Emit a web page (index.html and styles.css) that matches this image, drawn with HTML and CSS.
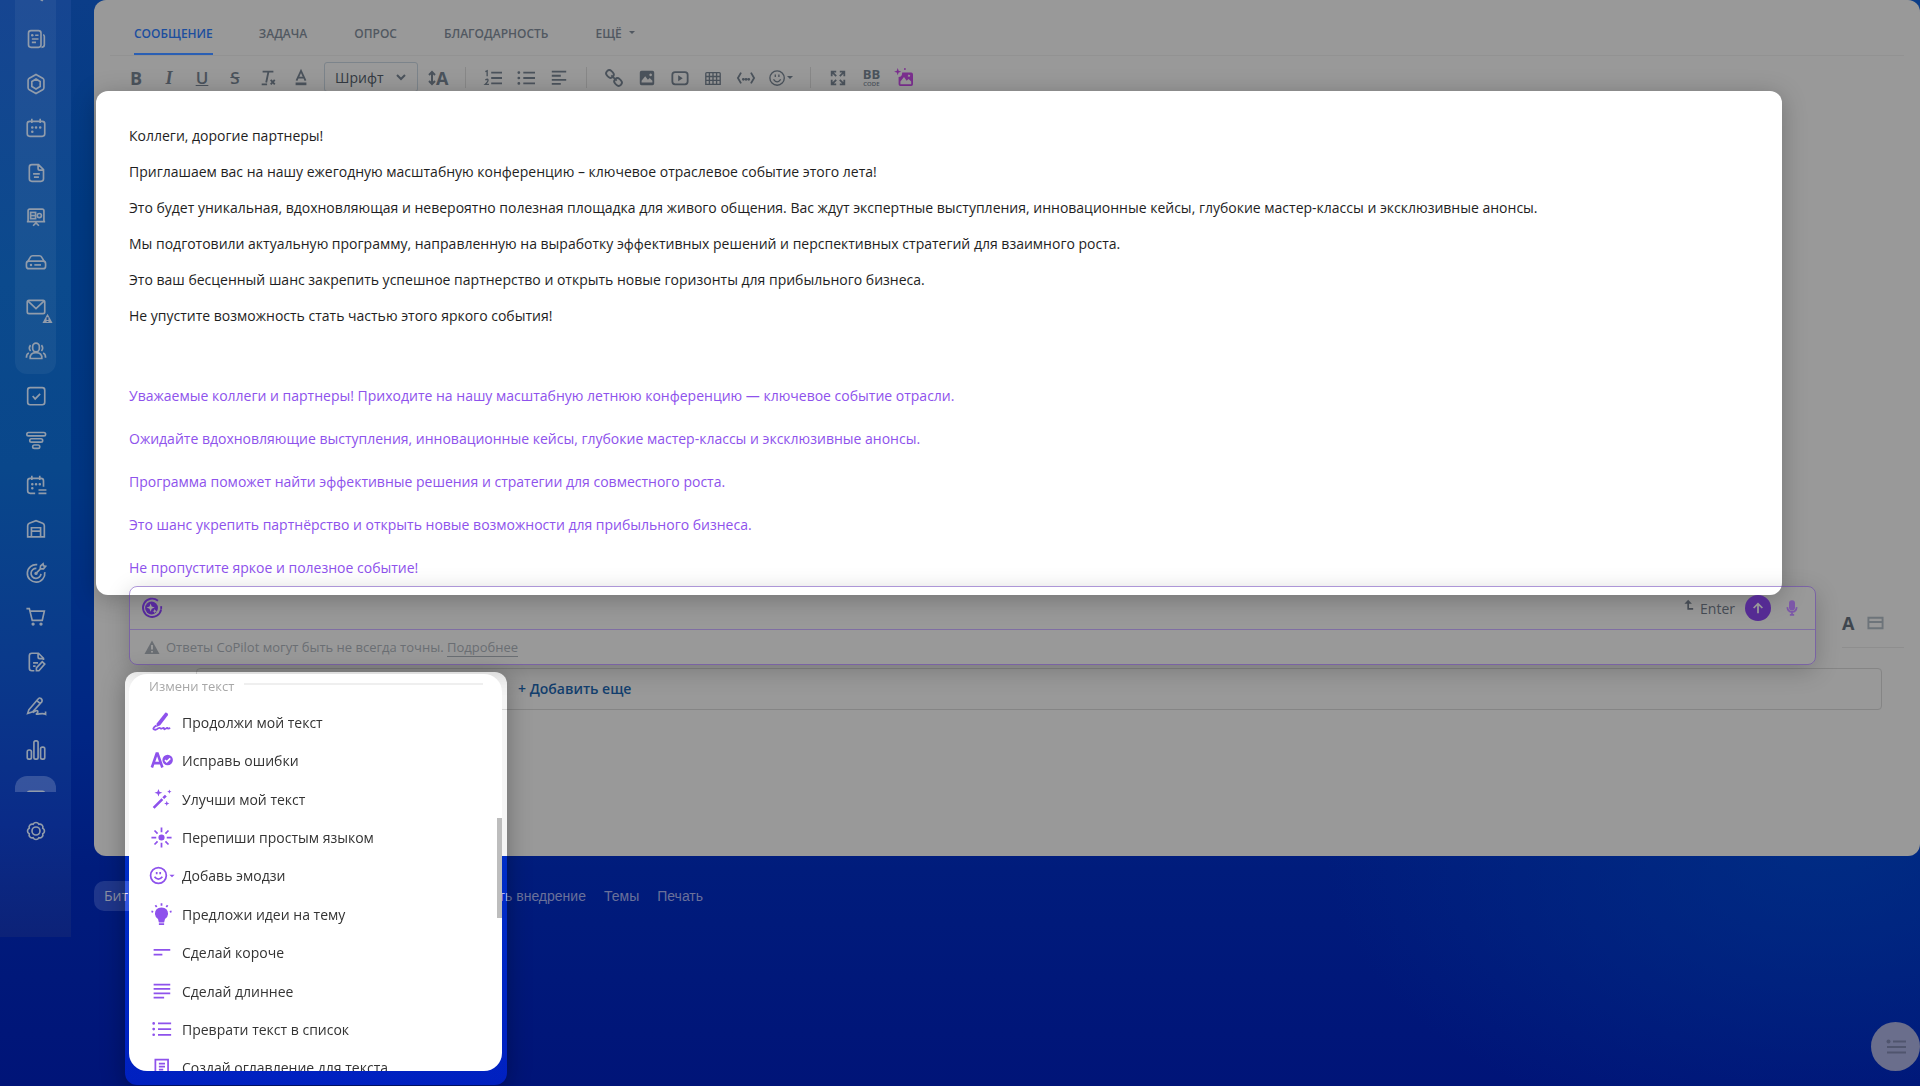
FILE: index.html
```
<!DOCTYPE html>
<html lang="ru">
<head>
  <meta charset="UTF-8">
  <title>Сообщение</title>
  <link rel="stylesheet" href="styles.css">
</head>
<body>
  <nav class="sidebar">
    <div class="sidebar-scroll">
      <div class="sidebar-menu">
        <div class="sidebar-group main-group">
          <a href="#" title="Мессенджер"><svg viewBox="0 0 24 24"><path d="M4 4h16v12h-3l3 4-7-4H4z"/></svg></a>
          <a href="#" title="Лента"><svg viewBox="0 0 24 24"><rect x="3" y="2" width="15" height="20" rx="3"/><path d="M20.500 7q1.500 0 1.500 2v10q0 3-3.500 3M11 7.500h4M7 12h8M7 16h5"/><circle cx="7.500" cy="7.500" r="1.500" class="solid"/></svg></a>
          <a href="#" title="Коллабы"><svg viewBox="0 0 24 24"><path d="M12 .500 20 5q1.500 1 1.500 2.500v9q0 1.500-1.500 2.500L12 23.500 4 19q-1.500-1-1.500-2.500v-9Q2.500 6 4 5z"/><path d="m12 6 5 3v6l-5 3-5-3V9z"/></svg></a>
          <a href="#" title="Календарь"><svg viewBox="0 0 24 24"><rect x="1.500" y="4" width="21" height="18" rx="3"/><path d="M7 1v5M17 1v5"/><path class="dots" d="M7.500 11.500h.1M12 11.500h.1M17 11.500h.1M7.500 16.500h.1"/></svg></a>
          <a href="#" title="Документы"><svg viewBox="0 0 24 24"><path d="M7 2h8l6 6v11q0 3-3 3H7q-3 0-3-3V5q0-3 3-3zM14.500 2v4.500q0 2 2 2H21M8.500 13h8M9.500 17h6"/></svg></a>
          <a href="#" title="Доски"><svg viewBox="0 0 24 24"><path d="M2.500 17V4.500q0-2 2-2h15q2 0 2 2V17M1 17.500h22M12 17.500V20M8.500 22.500l3.500-3.500 3.500 3.500"/><rect x="5.500" y="6.500" width="6" height="7.500"/><path d="M5.500 10.300h6"/><circle cx="16" cy="10.300" r="2.500"/></svg></a>
          <a href="#" title="Диск"><svg viewBox="0 0 24 24"><path d="m2 11.500 3-5q1-2 3-2h8q2 0 3 2l3 5"/><rect x=".500" y="11" width="23" height="9" rx="3"/><path d="M10 15.500h8"/><circle cx="6" cy="15.500" r="1.500" class="solid"/></svg></a>
          <a href="#" title="Почта"><svg viewBox="0 0 24 24"><rect x="1.500" y="4" width="21" height="16" rx="2"/><path d="m2.500 5 9.500 9 9.500-9"/></svg><svg class="warn" viewBox="0 0 12 12"><path d="M6 .800 11.500 11H.500z"/><path class="mark" d="M6 4.500v3M6 8.800v1"/></svg></a>
          <a href="#" title="Группы"><svg viewBox="0 0 24 24"><rect x="8" y="2.500" width="8" height="10.500" rx="4"/><path d="M5 21q-.5-7 7-7t7 7zM5.500 5q-3 3.500 0 7M18.500 5q3 3.500 0 7M.500 20q0-4.500 3-5.500M23.500 20q0-4.500-3-5.500"/></svg></a>
        </div>
        <div class="sidebar-group">
          <a href="#" title="Задачи"><svg viewBox="0 0 24 24"><rect x="2" y="2" width="20.500" height="20.500" rx="3"/><path d="m8 12 3 3.500 6-6"/></svg></a>
          <a href="#" title="CRM"><svg viewBox="0 0 24 24"><rect x="1" y="3" width="22.500" height="4" rx="2"/><rect x="4.500" y="10.500" width="15.500" height="4" rx="2"/><rect x="8" y="18" width="8.500" height="4" rx="2"/></svg></a>
          <a href="#" title="Онлайн-запись"><svg viewBox="0 0 24 24"><path d="M11 22H5q-3 0-3-3V7q0-3 3-3h13q3 0 3 3v7M7 1v5M16.500 1v5M15 18h9.500M15 22h9.500"/><path class="dots" d="M7.500 11h.1M12 11h.1M16.500 11h.1M7.500 16h.1"/></svg></a>
          <a href="#" title="Склад"><svg viewBox="0 0 24 24"><path d="M6.500 21.500H2V8q0-2 2-3l8-3 8 3q2 1 2 3v13.500h-4.500M6.500 21.500V10.500h11v11zM6.500 14.500h11"/></svg></a>
          <a href="#" title="Маркетинг"><svg viewBox="0 0 24 24"><path d="M13.500 2A10.500 10.500 0 1 0 22.500 11M12.500 6.500A6 6 0 1 0 18 13M12 12.500l6-6M17 7l.5-3.500L20.500 1l.500 2.500 2.500.500L21 7z"/><circle cx="12" cy="12.500" r="2" class="solid"/></svg></a>
          <a href="#" title="Магазин"><svg viewBox="0 0 24 24"><path d="M.500 2h3.500L7.500 16h12L22 5H5"/><circle cx="8.500" cy="20.500" r="2" class="solid"/><circle cx="18" cy="20.500" r="2" class="solid"/></svg></a>
          <a href="#" title="Подпись"><svg viewBox="0 0 24 24"><path d="M10 22.500H7q-3 0-3-3v-15q0-3 3-3h8l6 6v2M14.500 1.500V6q0 2 2 2H21M8.500 13h6M8.500 17h3M12.500 22.500V19l7-7.500 3 3-7 8z"/></svg></a>
          <a href="#" title="КЭДО"><svg viewBox="0 0 24 24"><path d="m3.500 16.500 11-13q1.500-2 3.500-.500t1 4l-11 12-6 2zM13 5.500l4 3.500M8 20q5-3.500 6-2t-1 3 3 .500 7.500.500V18.500"/></svg></a>
          <a href="#" title="Аналитика"><svg viewBox="0 0 24 24"><rect x="1.500" y="12" width="5" height="11" rx="2"/><rect x="9.500" y="1" width="5" height="22" rx="2"/><rect x="17.500" y="8.500" width="5" height="14.500" rx="2"/></svg></a>
          <a href="#" title="Ещё" class="more"><svg viewBox="0 0 24 24"><rect x="2" y="4" width="20" height="16" rx="2"/></svg></a>
        </div>
      </div>
    </div>
    <a href="#" class="settings" title="Настройки"><svg viewBox="0 0 24 24"><circle cx="12" cy="12" r="4.800"/><path d="M20.130 8.630a3.800 3.800 0 0 1 0 6.740 3.800 3.800 0 0 1-4.760 4.760 3.800 3.800 0 0 1-6.740 0 3.800 3.800 0 0 1-4.760-4.760 3.800 3.800 0 0 1 0-6.740 3.800 3.800 0 0 1 4.760-4.760 3.800 3.800 0 0 1 6.740 0 3.800 3.800 0 0 1 4.760 4.760z"/></svg></a>
  </nav>

  <main class="content">
    <section class="feed-form">
      <div class="tabs">
        <button class="tab active">Сообщение</button>
        <button class="tab">Задача</button>
        <button class="tab">Опрос</button>
        <button class="tab">Благодарность</button>
        <button class="tab">Ещё <span class="caret"></span></button>
      </div>

      <div class="toolbar">
        <button title="Жирный"><b>B</b></button>
        <button title="Курсив"><b class="serif"><i>I</i></b></button>
        <button title="Подчёркнутый"><u>U</u></button>
        <button title="Зачёркнутый"><s>S</s></button>
        <button title="Очистить"><svg viewBox="0 0 20 20"><path d="M4 3h12M10.500 3 8 15M3 17h6M13 12l4.500 5M17.500 12 13 17"/></svg></button>
        <button title="Цвет"><svg viewBox="0 0 20 20"><path d="m5 13 5-11 5 11M6.500 9.500h7"/><path class="thick" d="M4 16.500h12"/></svg></button>
        <label class="font-select"><select aria-label="Шрифт"><option>Шрифт</option></select><svg viewBox="0 0 12 12"><path d="m2 4 4 4 4-4"/></svg></label>
        <button title="Размер" class="size"><svg viewBox="0 0 8 16"><path d="M4 3v10M1 5l3-3 3 3M1 11l3 3 3-3"/></svg><b>A</b></button>
        <span class="sep"></span>
        <button title="Нумерованный список"><svg viewBox="0 0 20 20"><path class="thin" d="M1.500 3 3.500 2v6M1.500 12q3-1.500 3 .5t-3 4.500h4"/><path d="M8 4h12M8 10h12M8 16h12"/></svg></button>
        <button title="Список"><svg viewBox="0 0 20 20"><path d="M7 4h13M7 10h13M7 16h13"/><path class="dots" d="M2 4h.1M2 10h.1M2 16h.1"/></svg></button>
        <button title="Выравнивание"><svg viewBox="0 0 20 20"><path d="M2 3h16M2 7.500h10M2 12h16M2 16.500h10"/></svg></button>
        <span class="sep"></span>
        <button title="Ссылка"><svg viewBox="0 0 20 20"><rect x="1" y="2" width="9" height="7" rx="3.500" transform="rotate(45 5.500 5.500)"/><rect x="10" y="11" width="9" height="7" rx="3.500" transform="rotate(45 14.500 14.500)"/><path d="m7 7 6 6"/></svg></button>
        <button title="Изображение"><svg viewBox="0 0 20 20"><path class="fill" fill-rule="evenodd" d="M4 2h12q2 0 2 2v12q0 2-2 2H4q-2 0-2-2V4q0-2 2-2zM4 15h12v-2l-3-3-2 2-3-4-4 5zM14 5a1.500 1.500 0 1 0 .1 0z"/></svg></button>
        <button title="Видео"><svg viewBox="0 0 20 20"><rect x="1.500" y="3.500" width="17" height="13.500" rx="3"/><path class="fill" d="m8 7 5 3.200L8 13.500z"/></svg></button>
        <button title="Таблица"><svg viewBox="0 0 20 20"><path class="thin" d="M3 4h14q1 0 1 1v12H2V5q0-1 1-1zM2 8.300h16M2 12.600h16M6 4v13M10 4v13M14 4v13"/></svg></button>
        <button title="Код"><svg viewBox="0 0 20 20"><path d="M4.500 4 1 10l3.500 6M15.500 4 19 10l-3.500 6"/><path class="dots" d="M7 11.500h.1M10 11.500h.1M13 11.500h.1"/></svg></button>
        <button title="Смайлы" class="smile"><svg viewBox="0 0 20 20"><circle cx="9" cy="10" r="8" class="thin"/><path class="thin" d="M5 11.500q4 5.500 8 0M7 6v3M11 6v3"/></svg><span class="caret"></span></button>
        <span class="sep"></span>
        <button title="Развернуть"><svg viewBox="0 0 20 20"><path d="M3 8V3h5M3 3l5 5M17 8V3h-5M17 3l-5 5M3 12v5h5M3 17l5-5M17 12v5h-5M17 17l-5-5"/></svg></button>
        <button title="BB-код" class="bb"><b>BB</b><small>CODE</small></button>
        <button title="Изображение CoPilot" class="ai"><svg viewBox="0 0 20 20"><path class="fill" fill-rule="evenodd" d="M8 4h10q2 0 2 2v11q0 2-2 2H6q-2 0-2-2V9q4 0 4-5zM6 17h12v-3l-3-3-2 2-3-4-4 5zM15 6l-1 2 2 1 1-2z"/><path class="fill" d="m3-1 1 3 3 1-3 1-1 3-1-3-3-1 3-1z"/><circle class="fill" cx="11" cy="0" r="1"/></svg></button>
      </div>

      <article class="editor">
        <p>Коллеги, дорогие партнеры!</p>
        <p>Приглашаем вас на нашу ежегодную масштабную конференцию – ключевое отраслевое событие этого лета!</p>
        <p>Это будет уникальная, вдохновляющая и невероятно полезная площадка для живого общения. Вас ждут экспертные выступления, инновационные кейсы, глубокие мастер-классы и эксклюзивные анонсы.</p>
        <p>Мы подготовили актуальную программу, направленную на выработку эффективных решений и перспективных стратегий для взаимного роста.</p>
        <p>Это ваш бесценный шанс закрепить успешное партнерство и открыть новые горизонты для прибыльного бизнеса.</p>
        <p>Не упустите возможность стать частью этого яркого события!</p>
        <div class="suggestion">
          <p>Уважаемые коллеги и партнеры! Приходите на нашу масштабную летнюю конференцию — ключевое событие отрасли.</p>
          <p>Ожидайте вдохновляющие выступления, инновационные кейсы, глубокие мастер-классы и эксклюзивные анонсы.</p>
          <p>Программа поможет найти эффективные решения и стратегии для совместного роста.</p>
          <p>Это шанс укрепить партнёрство и открыть новые возможности для прибыльного бизнеса.</p>
          <p>Не пропустите яркое и полезное событие!</p>
        </div>
      </article>

      <div class="copilot-row">
        <div class="copilot">
          <div class="copilot-input">
            <svg class="logo" viewBox="0 0 24 24"><path d="M18.500 4A10 10 0 1 0 22 13.500"/><path d="M22 10v3"/><circle cx="11.500" cy="12" r="7"/><path class="star" d="m10.500 7 1.200 3.300L15 11.500l-3.300 1.200L10.500 16l-1.200-3.300L6 11.500l3.300-1.200zM15 13l.700 1.800 1.800.700-1.800.700L15 18l-.700-1.800-1.800-.700 1.800-.700z"/></svg>
            <input type="text" aria-label="Запрос CoPilot">
            <span class="enter"><svg viewBox="0 0 12 14"><path d="M5 3v8h6"/><path class="fill" d="m5 0 4.500 5h-9z"/></svg>Enter</span>
            <button class="send" title="Отправить"><svg viewBox="0 0 16 16"><path d="M8 14V3M3 8l5-5 5 5"/></svg></button>
            <button class="mic" title="Диктовка"><svg viewBox="0 0 14 18"><rect x="4.500" y="1" width="5" height="10" rx="2.500"/><path d="M1.500 8q.5 5.500 5.500 5.500T12.500 8M7 13.500V17M4.500 17h5"/></svg></button>
          </div>
          <div class="copilot-note">
            <svg viewBox="0 0 16 16"><path d="M8 1.500 15.500 15H.500z"/><path class="mark" d="M8 6v4.500M8 12v1.500"/></svg>
            <span>Ответы CoPilot могут быть не всегда точны. <a href="#">Подробнее</a></span>
          </div>
        </div>
        <div class="editor-tools">
          <button title="Редактор"><b>A</b></button>
          <button title="Тема"><svg viewBox="0 0 18 14"><path d="M1.500 1.500h15v11h-15zM1.500 6h15"/></svg></button>
        </div>
      </div>

      <div class="recipients"><button>+ Добавить еще</button></div>
    </section>

    <footer class="footer">
      <a href="#" class="brand">Битрикс24 © 2025</a>
      <a href="#" class="order">Заказать внедрение</a>
      <a href="#">Темы</a>
      <a href="#">Печать</a>
    </footer>
  </main>

  <div class="popup">
    <div class="popup-menu">
      <h4>Измени текст</h4>
      <div class="popup-list">
        <button><svg viewBox="0 0 24 24"><path class="fill" d="M16.500.500q3 .2 3 3l-9 11.500-4.500 2 .5-4z"/><path d="M6 15.500q-5 3.500-2.500 4.500t5-1.500q1.500-1 2 0t2.500 0 2 .500 2 0 2-.500 3 0"/></svg>Продолжи мой текст</button>
        <button><svg viewBox="0 0 24 24"><path class="big" d="m1 20 5.500-16h1L13 20M3.500 15h7"/><circle class="fill" cx="19" cy="11.500" r="6"/><path class="white" d="m16 11.500 2 2 4-4"/></svg>Исправь ошибки</button>
        <button><svg viewBox="0 0 24 24"><path class="big" d="M3 21.500 13 11.500M14 10.500l3-3"/><path class="fill" d="m8.500 0 1.200 3L13 4.200 9.700 5.400 8.500 8.500 7.300 5.400 4 4.200 7.300 3zM21 .500l.7 1.800 1.800.7-1.800.7L21 5.500l-.7-1.800-1.800-.7 1.800-.7zM18 13.500l.8 2.200 2.200.8-2.200.8-.8 2.200-.8-2.200-2.200-.8 2.200-.8z"/></svg>Улучши мой текст</button>
        <button><svg viewBox="0 0 24 24"><circle class="fill" cx="12" cy="12" r="3.500"/><path d="M12 .500V6M12 18v5.500M.500 12H6M18 12h5.500M4 4l3.500 3.500M16.500 16.500 20 20M20 4l-3.500 3.500M7.500 16.500 4 20"/></svg>Перепиши простым языком</button>
        <button><svg viewBox="0 0 24 24"><circle cx="8.500" cy="12" r="9"/><path d="M4 13.500q4.500 5.500 9 0M6.500 8v2.500M10.500 8v2.500"/><path class="fill" d="M21 11h6l-3 3z"/></svg>Добавь эмодзи</button>
        <button><svg viewBox="0 0 24 24"><path class="fill" d="M12 4q7.500.5 7.500 7.500 0 3-3.500 5.500l-1 4H9l-1-4q-3.500-2.500-3.500-5.500Q4.500 4.500 12 4zM9 22h6v2H9z"/><path d="M12-1v3M5 1.500l1.500 2M19 1.500l-1.500 2M.500 8.500l2 .5M23.500 8.500l-2 .5"/></svg>Предложи идеи на тему</button>
        <button><svg viewBox="0 0 24 24"><path d="M3 9h19M3 14.500h10"/></svg>Сделай короче</button>
        <button><svg viewBox="0 0 24 24"><path d="M3 4h19M3 9h19M3 14h19M3 19h12"/></svg>Сделай длиннее</button>
        <button><svg viewBox="0 0 24 24"><path d="M8 5h15M8 11.500h15M8 18h15"/><path class="dots" d="M3 5h.1M3 11.500h.1M3 18h.1"/></svg>Преврати текст в список</button>
        <button><svg viewBox="0 0 24 24"><path d="M5 22V3h14.500v19zM9 7.500h7M9 11h7M9 14.500h5"/></svg>Создай оглавление для текста</button>
      </div>
      <span class="scroll-thumb"></span>
    </div>
  </div>

  <button class="fab" title="Меню"><svg viewBox="0 0 20 16"><path d="M7 2.500h13M1 8h19M1 13.500h19"/><circle cx="2.500" cy="2.500" r="2"/></svg></button>
</body>
</html>
```
FILE: styles.css
```
* {
  box-sizing: border-box;
}

body {
  position: relative;
  display: flex;
  align-items: flex-start;
  gap: 23px;
  min-height: 100vh;
  margin: 0;
  overflow: hidden;
  font-family: "Open Sans", "Noto Sans", sans-serif;
  font-size: 14px;
  color: #1e1e1e;
  background:
    radial-gradient(ellipse 500px 300px at 95% 78%, rgba(0, 50, 135, 0.7), transparent),
    linear-gradient(180deg, #0b3d88 0, #003a83 20%, #003684 45%, #002584 68%, #001c7c 80%, #001478 100%);
}

a {
  color: inherit;
  text-decoration: none;
}

button {
  padding: 0;
  border: none;
  background: none;
  color: inherit;
  font: inherit;
  cursor: pointer;
}

svg {
  display: block;
  fill: none;
  stroke: currentColor;
  stroke-width: 2;
  overflow: visible;
}

.fill, .solid {
  fill: currentColor;
  stroke: none;
}

.dots {
  stroke-width: 3;
  stroke-linecap: round;
}

/* left menu */
.sidebar {
  flex: none;
  width: 71px;
  height: 937px;
  color: #919cab;
  background: linear-gradient(180deg, #164591 0, #0b4a8d 30%, #09478b 50%, #0a3a8b 70%, #0a2b88 88%, #0c2278 100%);
}

.sidebar-scroll {
  height: 792px;
  overflow: hidden;
}

.sidebar-menu {
  display: flex;
  flex-direction: column;
  width: 41px;
  height: 848px;
  margin: -28px 0 0 15px;
}

.sidebar-group {
  display: flex;
  flex: 10;
  flex-direction: column;
}

.main-group {
  flex: 9;
  border-radius: 12px;
  background: rgba(255, 255, 255, 0.05);
}

.sidebar-group a {
  position: relative;
  display: flex;
  flex: 1;
  align-items: center;
  justify-content: center;
}

.sidebar svg {
  width: 20px;
  height: 20px;
}

.sidebar .warn {
  position: absolute;
  right: 3px;
  bottom: 5px;
  width: 11px;
  height: 11px;
  fill: currentColor;
  stroke: none;
}

.sidebar .mark {
  stroke: #1c4c8c;
}

.sidebar .more {
  margin-top: 3px;
  border-radius: 12px;
  background: rgba(255, 255, 255, 0.18);
}

.settings {
  display: flex;
  justify-content: center;
  padding-top: 29px;
}

/* post form */
.content {
  flex: 1;
  min-width: 0;
}

.feed-form {
  height: 856px;
  border-radius: 12px;
  background: #999;
}

.tabs {
  display: flex;
  gap: 45px;
  height: 56px;
  margin: 0 16px;
  padding: 0 24px;
  border-bottom: 1px solid #929292;
}

.tab {
  padding-top: 14px;
  border-bottom: 2px solid transparent;
  font-size: 12px;
  font-weight: 600;
  text-transform: uppercase;
  color: #515861;
}

.tab.active {
  border-color: #2a5fb4;
  color: #1c4e9e;
}

.tab:nth-child(n + 2) {
  padding-left: 1px;
  padding-right: 1px;
}

.caret {
  display: inline-block;
  margin: 0 0 4px 4px;
  border: 3px solid transparent;
  border-top-color: currentColor;
  border-bottom: none;
}

.toolbar {
  display: flex;
  align-items: center;
  gap: 13px;
  height: 35px;
  padding: 8px 32px 0;
  color: #4b535c;
}

.toolbar button {
  display: flex;
  align-items: center;
  justify-content: center;
  min-width: 20px;
  font-size: 18px;
  line-height: 20px;
}

.toolbar svg {
  width: 18px;
  height: 18px;
}

.toolbar u, .toolbar s {
  font-size: 17px;
  font-weight: 600;
}

.serif {
  font-family: "Liberation Serif", serif;
}

.thin {
  stroke-width: 1.5;
}

.thick {
  stroke-width: 3;
}

.font-select {
  display: flex;
  align-items: center;
  align-self: flex-start;
  flex: none;
  width: 94px;
  height: 30px;
  margin: -2px -3px 0 0;
  padding: 0 10px;
  border: 1px solid #7c848b;
  border-radius: 3px;
}

.font-select select {
  flex: 1;
  padding: 0;
  border: none;
  appearance: none;
  background: none;
  color: #333a42;
  font: inherit;
  font-size: 14px;
}

.font-select svg {
  width: 12px;
  height: 12px;
}

.toolbar .size svg {
  width: 8px;
  height: 16px;
}

.sep {
  width: 1px;
  height: 21px;
  margin: 0 4px;
  background: #888;
}

.smile .caret {
  margin: 0;
}

.toolbar .bb {
  flex-direction: column;
}

.bb b {
  font-size: 13px;
  line-height: 12px;
}

.bb small {
  font-size: 6px;
  line-height: 8px;
  font-weight: 600;
}

.ai {
  color: #7b2f8f;
}

.editor {
  position: relative;
  margin: 0 138px 0 2px;
  padding: 34px 33px 16px;
  border-radius: 12px;
  background: #fff;
  box-shadow: 0 4px 24px rgba(0, 0, 0, 0.25);
}

.editor p {
  margin: 0 0 14px;
  line-height: 22px;
}

.editor .suggestion {
  padding-top: 44px;
  color: #8e52ec;
}

.suggestion p {
  margin-bottom: 21px;
}

.suggestion p:last-child {
  margin: 0;
}

.copilot-row {
  position: relative;
  display: flex;
  align-items: flex-start;
  gap: 26px;
  margin: -9px 0 0 35px;
}

.copilot {
  flex: 1;
  border: 1px solid rgba(92, 46, 175, 0.5);
  border-radius: 8px;
  box-shadow: 0 6px 24px rgba(0, 0, 0, 0.2);
}

.copilot-input {
  display: flex;
  align-items: center;
  height: 43px;
  padding: 0 17px 0 11px;
  border-bottom: 1px solid #7f6ea3;
}

.logo {
  width: 22px;
  height: 22px;
  color: #55289a;
}

.logo circle {
  fill: currentColor;
  stroke: none;
}

.star {
  fill: #999;
  stroke: none;
}

.copilot-input input {
  flex: 1;
  border: none;
  outline: none;
  background: none;
  font: inherit;
}

.enter {
  display: flex;
  gap: 6px;
  color: #444a52;
}

.enter svg {
  width: 10px;
  height: 13px;
}

.send {
  display: flex;
  align-items: center;
  justify-content: center;
  width: 26px;
  height: 26px;
  margin: 0 15px 0 10px;
  border-radius: 50%;
  background: #552b93;
  color: #999;
}

.send svg {
  width: 14px;
  height: 14px;
}

.mic {
  color: #7c57a8;
}

.mic svg {
  width: 12px;
  height: 16px;
}

.mic rect {
  fill: currentColor;
}

.copilot-note {
  display: flex;
  align-items: center;
  gap: 6px;
  height: 34px;
  padding-left: 14px;
  font-size: 13px;
  color: #6a6e73;
}

.copilot-note svg {
  width: 16px;
  height: 16px;
  fill: currentColor;
  stroke: none;
}

.copilot-note .mark {
  stroke: #999;
}

.copilot-note a {
  border-bottom: 1px solid #6a6e73;
}

.editor-tools {
  display: flex;
  align-items: flex-start;
  gap: 13px;
  width: 62px;
  height: 35px;
  margin: 27px 16px 0 0;
  border-bottom: 1px solid #8e8e8e;
  color: #3f464e;
}

.editor-tools b {
  font-size: 18px;
  line-height: 20px;
}

.editor-tools svg {
  width: 17px;
  height: 20px;
  color: #6d747a;
}

.recipients {
  height: 42px;
  margin: 3px 38px 0 102px;
  padding-left: 321px;
  border: 1px solid #858585;
  border-radius: 4px;
  line-height: 40px;
  font-weight: 600;
  color: #133f6e;
}

.footer {
  display: flex;
  align-items: center;
  gap: 18px;
  height: 30px;
  margin-top: 25px;
  font-family: "Liberation Sans", Arial, sans-serif;
  color: #6a719a;
}

.brand {
  padding: 0 10px;
  border-radius: 10px;
  background: rgba(255, 255, 255, 0.12);
  font-family: "Open Sans", sans-serif;
  line-height: 30px;
  color: #8d91a4;
}

.order {
  margin-left: 200px;
}

/* CoPilot menu, the margin round it brightens the page below */
.popup {
  position: absolute;
  top: 672px;
  left: 125px;
  width: 382px;
  height: 413px;
  padding: 2px 5px 14px 4px;
  border-radius: 12px;
  backdrop-filter: brightness(1.6);
  box-shadow: 0 4px 24px rgba(0, 0, 0, 0.3);
}

.popup-menu {
  position: relative;
  height: 100%;
  overflow: hidden;
  border-radius: 18px;
  background: #fff;
  color: #333;
}

.popup h4 {
  display: flex;
  align-items: flex-start;
  gap: 10px;
  margin: 0;
  padding: 0 19px 0 20px;
  height: 29px;
  font-weight: 400;
  line-height: 24px;
  font-size: 13px;
  color: #a8a8a8;
}

.popup h4::after {
  content: "";
  flex: 1;
  height: 2px;
  margin-top: 9px;
  background: #efefef;
}

.popup-list {
  display: flex;
  flex-direction: column;
  height: 384px;
}

.popup-list button {
  display: flex;
  flex: 1;
  align-items: center;
  gap: 10px;
  padding-left: 22px;
}

.popup-list svg {
  width: 21px;
  height: 21px;
  color: #8e52ec;
}

.popup-list .big {
  stroke-width: 3;
}

.white {
  stroke: #fff;
}

.scroll-thumb {
  position: absolute;
  top: 144px;
  right: 0;
  width: 5px;
  height: 100px;
  background: #bdbdbd;
}

.fab {
  position: absolute;
  right: 0;
  bottom: 15px;
  display: flex;
  align-items: center;
  justify-content: center;
  width: 49px;
  height: 49px;
  border-radius: 50%;
  background: #6a6e8c;
  color: #50556e;
}

.fab svg {
  width: 20px;
  height: 16px;
}

.fab circle {
  fill: currentColor;
  stroke: none;
}
```
